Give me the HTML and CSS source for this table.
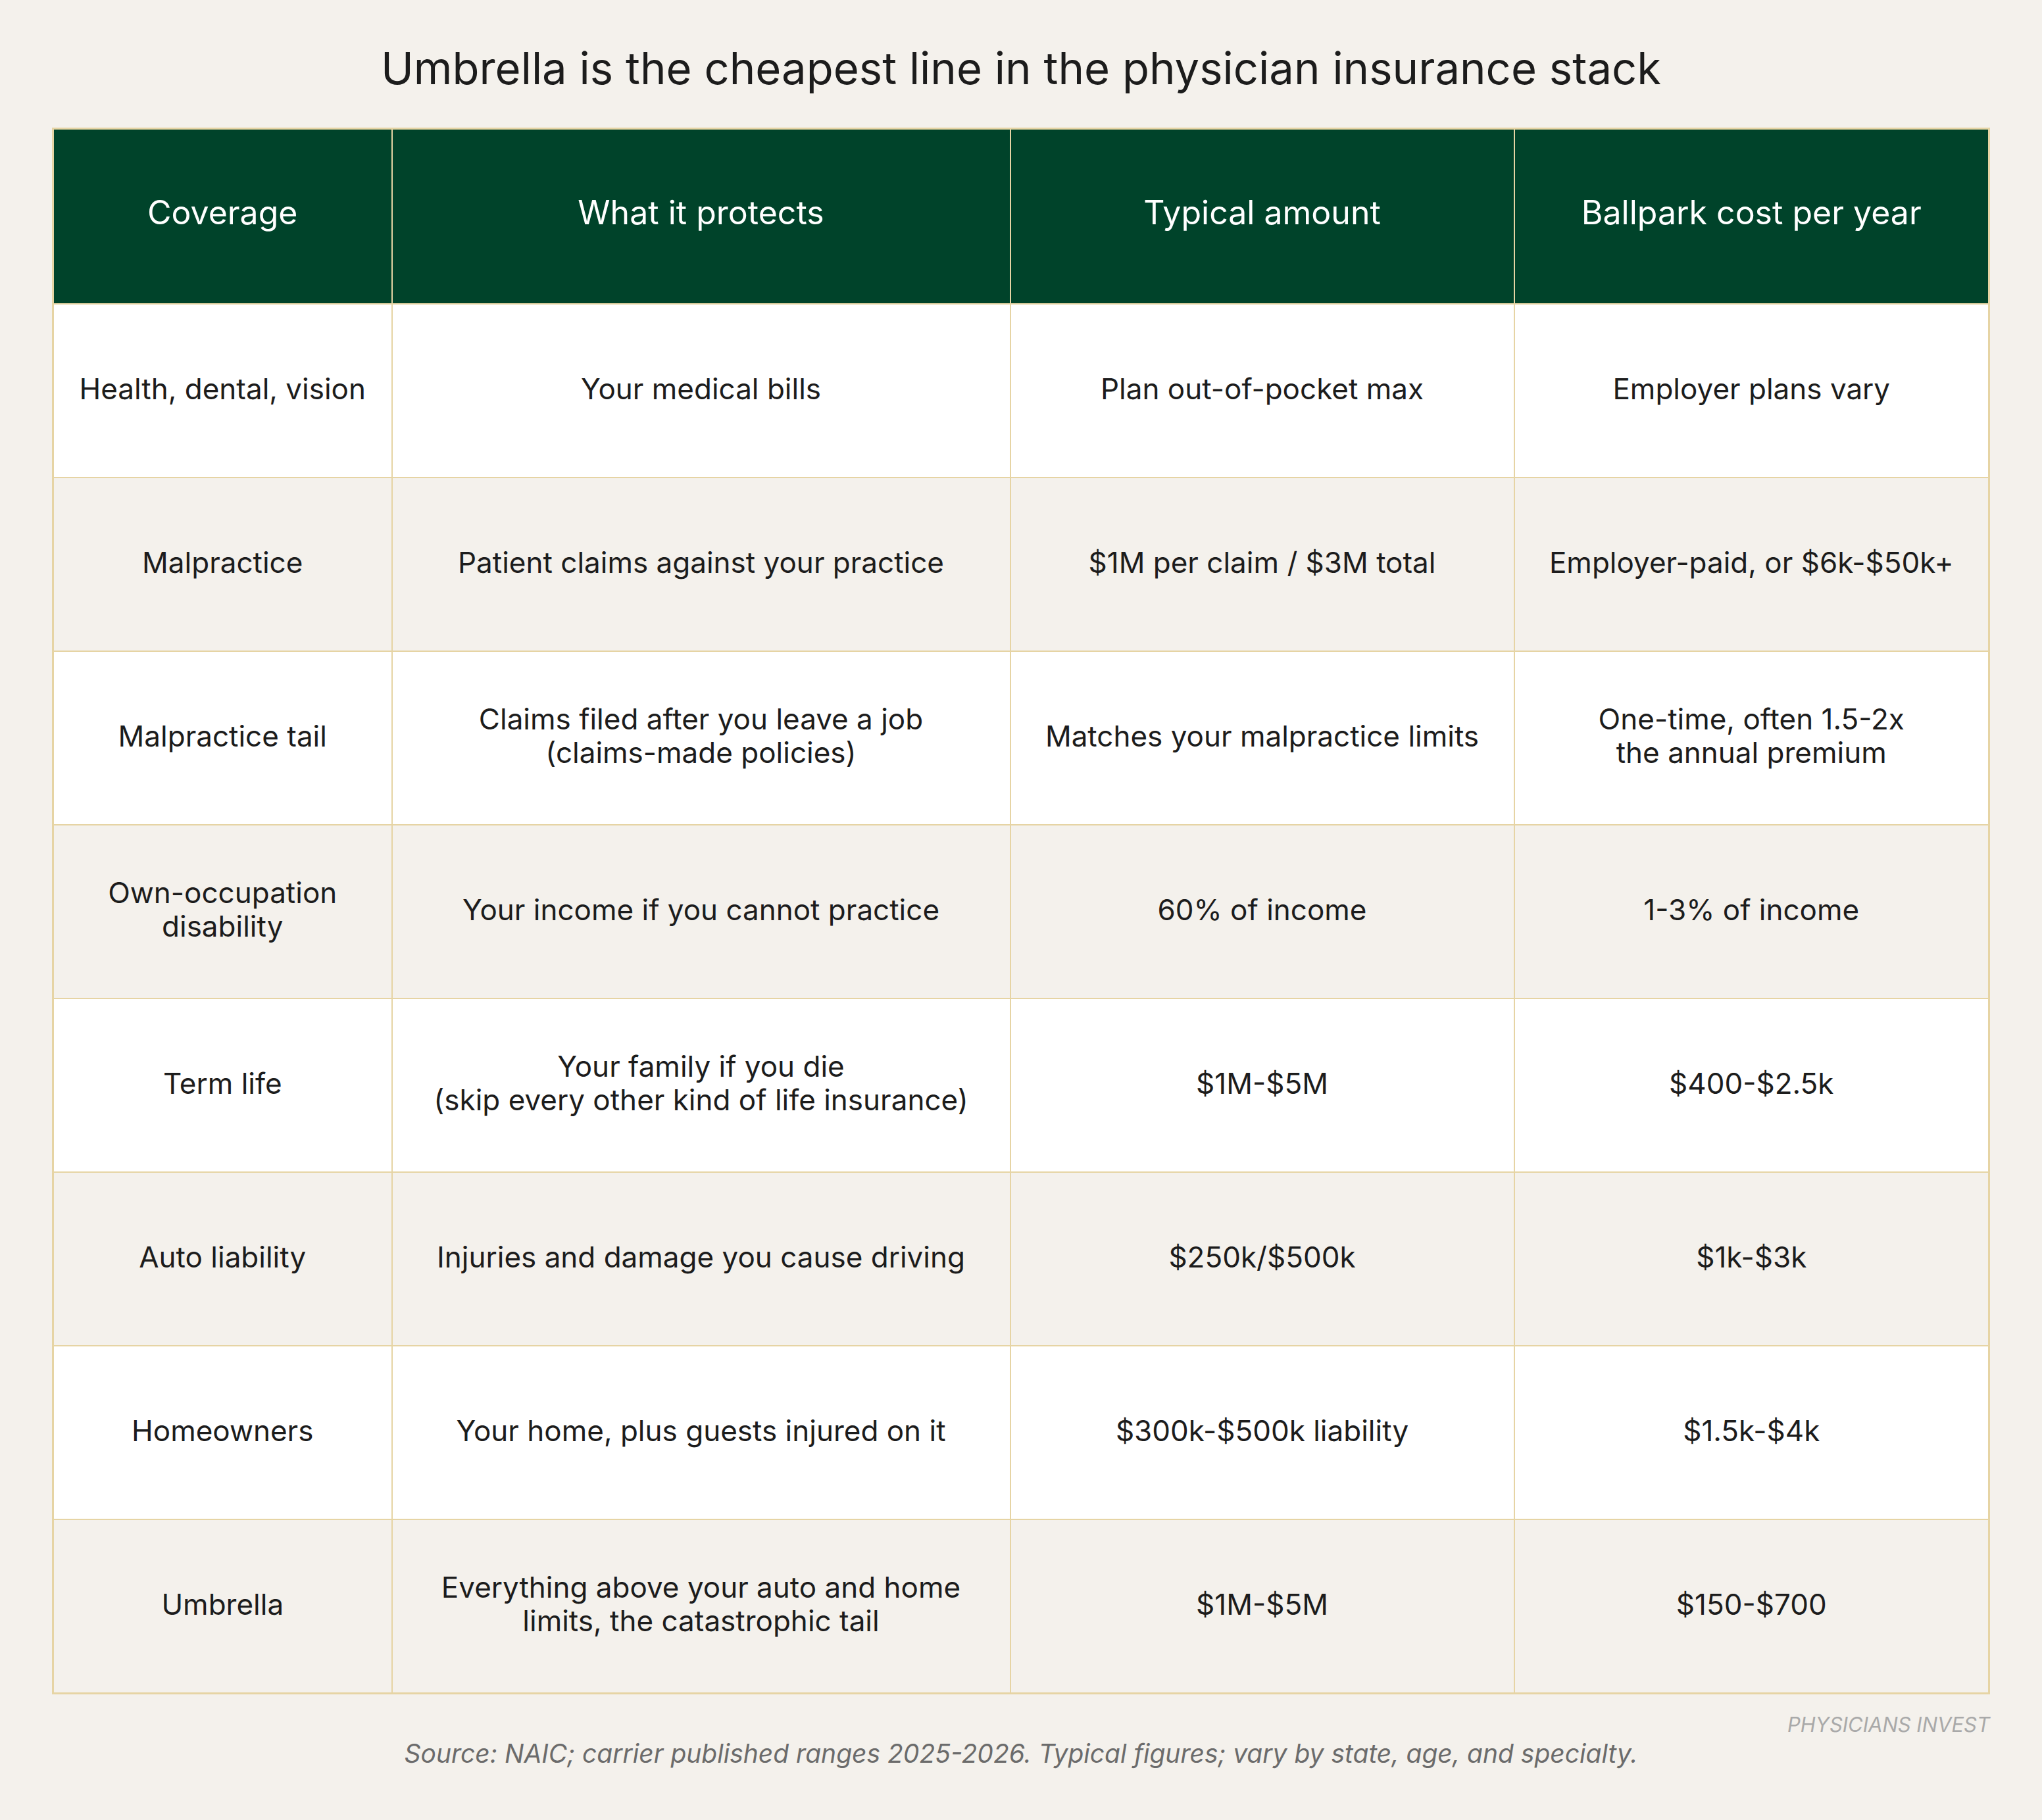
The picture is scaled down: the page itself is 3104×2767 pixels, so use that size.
FILE: index.html
```html
<!DOCTYPE html>
<html lang="en">
<head>
<meta charset="utf-8">
<title>Physician insurance stack</title>
<link rel="stylesheet" href="styles.css">
</head>
<body>
<main class="page">
  <h1 class="title">Umbrella is the cheapest line in the physician insurance stack</h1>
  <table class="grid">
    <colgroup>
      <col class="c1"><col class="c2"><col class="c3"><col class="c4">
    </colgroup>
    <thead>
      <tr>
        <th>Coverage</th>
        <th>What it protects</th>
        <th>Typical amount</th>
        <th>Ballpark cost per year</th>
      </tr>
    </thead>
    <tbody>
      <tr>
        <td>Health, dental, vision</td>
        <td>Your medical bills</td>
        <td>Plan out-of-pocket max</td>
        <td>Employer plans vary</td>
      </tr>
      <tr>
        <td>Malpractice</td>
        <td>Patient claims against your practice</td>
        <td>$1M per claim / $3M total</td>
        <td>Employer-paid, or $6k-$50k+</td>
      </tr>
      <tr>
        <td>Malpractice tail</td>
        <td>Claims filed after you leave a job<br>(claims-made policies)</td>
        <td>Matches your malpractice limits</td>
        <td>One-time, often 1.5-2x<br>the annual premium</td>
      </tr>
      <tr>
        <td>Own-occupation<br>disability</td>
        <td>Your income if you cannot practice</td>
        <td>60% of income</td>
        <td>1-3% of income</td>
      </tr>
      <tr>
        <td>Term life</td>
        <td>Your family if you die<br>(skip every other kind of life insurance)</td>
        <td>$1M-$5M</td>
        <td>$400-$2.5k</td>
      </tr>
      <tr>
        <td>Auto liability</td>
        <td>Injuries and damage you cause driving</td>
        <td>$250k/$500k</td>
        <td>$1k-$3k</td>
      </tr>
      <tr>
        <td>Homeowners</td>
        <td>Your home, plus guests injured on it</td>
        <td>$300k-$500k liability</td>
        <td>$1.5k-$4k</td>
      </tr>
      <tr>
        <td>Umbrella</td>
        <td>Everything above your auto and home<br>limits, the catastrophic tail</td>
        <td>$1M-$5M</td>
        <td>$150-$700</td>
      </tr>
    </tbody>
  </table>
  <div class="brand">PHYSICIANS INVEST</div>
  <p class="source">Source: NAIC; carrier published ranges 2025-2026. Typical figures; vary by state, age, and specialty.</p>
</main>
</body>
</html>
```
FILE: styles.css
```css
html, body {
  margin: 0;
  padding: 0;
  background: #f4f1ec;
}
body {
  font-family: Inter, "Noto Sans", "Liberation Sans", sans-serif;
  color: #1c1c1c;
}
.page {
  padding: 0 79px;
  display: flex;
  flex-direction: column;
}
.title {
  margin: 0;
  height: 194px;
  display: flex;
  align-items: center;
  justify-content: center;
  font-size: 67px;
  font-weight: 400;
  color: #1c1c1c;
  padding-top: 12px;
  box-sizing: border-box;
}
.grid {
  width: 100%;
  border-collapse: collapse;
  table-layout: fixed;
  border: 3px solid #e6d4a4;
}
.c1 { width: 515px; }
.c2 { width: 940px; }
.c3 { width: 766px; }
.c4 { width: auto; }
.grid th,
.grid td {
  border: 2px solid #e6d4a4;
  text-align: center;
  vertical-align: middle;
  font-weight: 400;
}
.grid th {
  height: 252px;
  padding: 0 20px 12px;
  background: #00432a;
  color: #ffffff;
  font-size: 50px;
}
.grid td {
  height: 256px;
  padding: 0 20px 6px;
  font-size: 44px;
  line-height: 51px;
  color: #1c1c1c;
}
.grid tbody tr:nth-child(odd) td { background: #ffffff; }
.grid tbody tr:nth-child(even) td { background: #f4f1ec; }
.brand {
  margin-top: 27px;
  text-align: right;
  font-size: 31px;
  font-style: italic;
  color: #a9a9a9;
}
.source {
  margin: 2px 0 0;
  text-align: center;
  font-size: 39px;
  font-style: italic;
  color: #6b6b6b;
}
```
